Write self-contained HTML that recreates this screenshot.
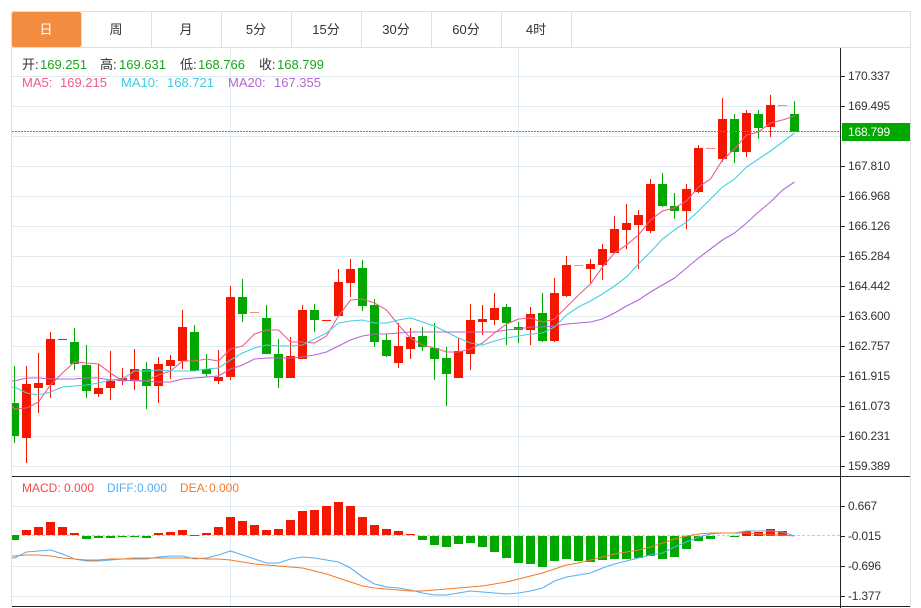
<!DOCTYPE html>
<html><head><meta charset="utf-8"><style>
html,body{margin:0;padding:0;background:#fff;width:921px;height:608px;overflow:hidden}
body{position:relative;font-family:"Liberation Sans","Noto Sans CJK SC",sans-serif;font-size:12px;color:#333}
svg{position:absolute;left:0;top:0}
.t{position:absolute;top:22px;height:16px;line-height:16px;width:70px;text-align:center;font-size:13px;color:#333}
.a{position:absolute;left:848px;height:14px;line-height:14px;font-size:12px;letter-spacing:-.2px;color:#333}
.l{position:absolute;height:16px;line-height:16px;font-size:13px;white-space:nowrap}
.m{font-size:12px}
</style></head><body>
<svg width="921" height="608" viewBox="0 0 921 608">
<defs><clipPath id="c"><rect x="12" y="48" width="828" height="558"/></clipPath></defs>
<g shape-rendering="crispEdges">
<path d="M12 76.5H840M12 106.5H840M12 136.5H840M12 166.5H840M12 196.5H840M12 226.5H840M12 256.5H840M12 286.5H840M12 316.5H840M12 346.5H840M12 376.5H840M12 406.5H840M12 436.5H840M12 466.5H840M12 506.5H840M12 566.5H840M12 596.5H840M230.5 48V606M518.5 48V606" stroke="#e1ebf2" fill="none"/>
<path d="M11.5 11.5H910.5V607M11.5 11.5V607M12 47.5H910M81.5 12V47M151.5 12V47M221.5 12V47M291.5 12V47M361.5 12V47M431.5 12V47M501.5 12V47M571.5 12V47" stroke="#dcdfe3" fill="none"/>
<path d="M12 535.5H840" stroke="#a9d4ea" stroke-dasharray="3 2" fill="none"/>
<g clip-path="url(#c)">
<path d="M14.5 366V443M74.5 328V370M86.5 345V398M146.5 362V409M194.5 325V371M206.5 354V377M242.5 279V322M266.5 305V354M278.5 339V388M314.5 304V332M362.5 260V311M374.5 299V347M386.5 334V357M422.5 327V351M434.5 323V380M446.5 347V406M506.5 304V345M518.5 322V343M542.5 293V342M662.5 173V207M674.5 193V219M734.5 114V163M758.5 110V139M794.5 101V132" stroke="#00a800" fill="none"/>
<path d="M12 403h7v33h-7zM70 342h9v22h-9zM82 365h9v26h-9zM142 369h9v17h-9zM190 332h9v39h-9zM202 369h9v5h-9zM238 297h9v17h-9zM262 318h9v36h-9zM274 354h9v24h-9zM310 310h9v10h-9zM358 268h9v38h-9zM370 305h9v37h-9zM382 340h9v16h-9zM418 336h9v11h-9zM430 348h9v11h-9zM442 358h9v16h-9zM502 307h9v16h-9zM514 327h9v3h-9zM538 313h9v28h-9zM658 184h9v22h-9zM670 206h9v5h-9zM730 119h9v33h-9zM754 114h9v14h-9zM790 114h9v18h-9z" fill="#00a800"/>
<path d="M26.5 366V463M38.5 353V413M50.5 332V398M98.5 364V397M110.5 351V400M122.5 368V385M134.5 349V390M158.5 357V403M170.5 355V379M182.5 310V369M218.5 350V384M230.5 286V380M290.5 337V378M302.5 305V359M338.5 269V316M350.5 259V297M398.5 323V368M410.5 328V359M458.5 338V378M470.5 304V370M482.5 305V335M494.5 293V325M530.5 307V345M554.5 278V342M566.5 256V297M590.5 259V283M602.5 244V280M614.5 216V253M626.5 204V249M638.5 210V269M650.5 179V233M686.5 184V229M698.5 145V193M722.5 98V162M746.5 110V157M770.5 95V137" stroke="#f51600" fill="none"/>
<path d="M22 384h9v54h-9zM34 383h9v5h-9zM46 339h9v46h-9zM58 339h9v1h-9zM94 388h9v6h-9zM106 381h9v7h-9zM118 378h9v3h-9zM130 369h9v12h-9zM154 364h9v22h-9zM166 360h9v6h-9zM178 327h9v34h-9zM214 377h9v4h-9zM226 297h9v80h-9zM286 356h9v22h-9zM298 310h9v49h-9zM322 320h9v1h-9zM334 282h9v34h-9zM346 269h9v14h-9zM394 346h9v17h-9zM406 337h9v12h-9zM454 351h9v27h-9zM466 320h9v34h-9zM478 319h9v3h-9zM490 308h9v12h-9zM526 314h9v16h-9zM550 293h9v48h-9zM562 265h9v31h-9zM586 264h9v5h-9zM598 249h9v16h-9zM610 229h9v24h-9zM622 223h9v7h-9zM634 215h9v10h-9zM646 184h9v47h-9zM682 189h9v22h-9zM694 148h9v44h-9zM718 119h9v40h-9zM742 113h9v39h-9zM766 105h9v22h-9z" fill="#f51600"/>
<path d="M250 312h9v1h-9zM574 265h9v1h-9zM706 148h9v1h-9zM778 105h9v1h-9z" fill="#f98a80"/>
<path d="M12 535h7v5h-7zM82 536h9v3h-9zM94 536h9v2h-9zM106 536h9v2h-9zM118 536h9v1h-9zM130 536h9v1h-9zM142 536h9v2h-9zM190 535h9v1h-9zM418 536h9v4h-9zM430 536h9v9h-9zM442 536h9v11h-9zM454 536h9v8h-9zM466 536h9v7h-9zM478 536h9v11h-9zM490 536h9v16h-9zM502 536h9v22h-9zM514 536h9v27h-9zM526 536h9v28h-9zM538 536h9v31h-9zM550 536h9v25h-9zM562 536h9v23h-9zM574 536h9v25h-9zM586 536h9v26h-9zM598 536h9v24h-9zM610 536h9v23h-9zM622 536h9v23h-9zM634 536h9v22h-9zM646 536h9v20h-9zM658 536h9v23h-9zM670 536h9v21h-9zM682 536h9v13h-9zM694 536h9v5h-9zM706 536h9v3h-9zM730 536h9v1h-9z" fill="#00a800"/>
<path d="M22 530h9v5h-9zM34 527h9v8h-9zM46 522h9v13h-9zM58 527h9v8h-9zM70 533h9v2h-9zM154 533h9v2h-9zM166 532h9v3h-9zM178 530h9v5h-9zM202 533h9v2h-9zM214 527h9v8h-9zM226 517h9v18h-9zM238 521h9v14h-9zM250 525h9v10h-9zM262 530h9v5h-9zM274 529h9v6h-9zM286 520h9v15h-9zM298 511h9v24h-9zM310 510h9v25h-9zM322 506h9v29h-9zM334 502h9v33h-9zM346 506h9v29h-9zM358 517h9v18h-9zM370 525h9v10h-9zM382 529h9v6h-9zM394 531h9v4h-9zM406 534h9v1h-9zM742 531h9v5h-9zM754 532h9v4h-9zM766 529h9v7h-9zM778 531h9v5h-9z" fill="#f51600"/>
</g>
<path d="M12 476.5H840M12 606.5H910M840.5 48V608M841 76.5h4M841 106.5h4M841 166.5h4M841 196.5h4M841 226.5h4M841 256.5h4M841 286.5h4M841 316.5h4M841 346.5h4M841 376.5h4M841 406.5h4M841 436.5h4M841 466.5h4M841 506.5h4M841 536.5h4M841 566.5h4M841 596.5h4" stroke="#222" fill="none"/>
<path d="M841 476.5H910" stroke="#333" fill="none"/>
<rect x="842" y="123" width="68" height="18" fill="#00a800"/>
<path d="M12 131.5H840" stroke="#2fb52f" stroke-dasharray="2 1" fill="none"/>
<rect x="12" y="12" width="69" height="35" rx="2" fill="#f48c40"/>
</g>
<g clip-path="url(#c)" fill="none" stroke-width="1.1">
<polyline stroke="#ef5b8c" points="12,406 14.5,409 26.5,408 38.5,402 50.5,385 62.5,373 74.5,362 86.5,363 98.5,364 110.5,373 122.5,381 134.5,380 146.5,381 158.5,375 170.5,371 182.5,361 194.5,361 206.5,359 218.5,361 230.5,349 242.5,346 254.5,334 266.5,330 278.5,330 290.5,342 302.5,342 314.5,343 326.5,336 338.5,316 350.5,300 362.5,299 374.5,303 386.5,310 398.5,325 410.5,338 422.5,345 434.5,348 446.5,352 458.5,352 470.5,349 482.5,343 494.5,333 506.5,324 518.5,319 530.5,318 542.5,322 554.5,319 566.5,307 578.5,295 590.5,284 602.5,267 614.5,253 626.5,245 638.5,235 650.5,220 662.5,211 674.5,208 686.5,201 698.5,187 710.5,179 722.5,160 734.5,149 746.5,135 758.5,132 770.5,123 782.5,120 794.5,116"/>
<polyline stroke="#45cfe2" points="12,387 14.5,387 26.5,393 38.5,395 50.5,392 62.5,387 74.5,386 86.5,385 98.5,383 110.5,380 122.5,379 134.5,371 146.5,371 158.5,370 170.5,371 182.5,371 194.5,371 206.5,369 218.5,368 230.5,360 242.5,353 254.5,348 266.5,345 278.5,346 290.5,346 302.5,345 314.5,339 326.5,333 338.5,323 350.5,321 362.5,320 374.5,323 386.5,323 398.5,320 410.5,318 422.5,322 434.5,326 446.5,332 458.5,338 470.5,343 482.5,345 494.5,341 506.5,338 518.5,336 530.5,334 542.5,333 554.5,327 566.5,315 578.5,307 590.5,301 602.5,294 614.5,286 626.5,277 638.5,264 650.5,252 662.5,239 674.5,230 686.5,222 698.5,211 710.5,199 722.5,187 734.5,179 746.5,167 758.5,159 770.5,151 782.5,142 794.5,133"/>
<polyline stroke="#b565d2" points="12,381 14.5,381 26.5,378 38.5,378 50.5,379 62.5,379 74.5,379 86.5,378 98.5,378 110.5,380 122.5,380 134.5,381 146.5,381 158.5,382 170.5,382 182.5,379 194.5,378 206.5,377 218.5,376 230.5,369 242.5,365 254.5,359 266.5,358 278.5,358 290.5,358 302.5,357 314.5,355 326.5,352 338.5,346 350.5,340 362.5,336 374.5,334 386.5,334 398.5,333 410.5,332 422.5,332 434.5,332 446.5,332 458.5,332 470.5,332 482.5,332 494.5,332 506.5,330 518.5,329 530.5,327 542.5,327 554.5,326 566.5,324 578.5,323 590.5,322 602.5,319 614.5,313 626.5,306 638.5,300 650.5,292 662.5,285 674.5,278 686.5,268 698.5,258 710.5,249 722.5,240 734.5,233 746.5,223 758.5,212 770.5,202 782.5,190 794.5,182"/>
<polyline stroke="#5aaef2" points="12,558 14.5,558 26.5,552 38.5,551 50.5,550 62.5,554 74.5,559 86.5,561 98.5,561 110.5,560 122.5,559 134.5,559 146.5,559 158.5,557 170.5,556 182.5,556 194.5,559 206.5,558 218.5,555 230.5,551 242.5,555 254.5,559 266.5,563 278.5,563 290.5,559 302.5,557 314.5,558 326.5,560 338.5,562 350.5,568 362.5,577 374.5,584 386.5,587 398.5,588 410.5,590 422.5,593 434.5,595 446.5,595 458.5,593 470.5,591 482.5,592 494.5,593 506.5,594 518.5,593 530.5,591 542.5,588 554.5,581 566.5,577 578.5,575 590.5,573 602.5,568 614.5,564 626.5,561 638.5,558 650.5,555 662.5,553 674.5,547 686.5,542 698.5,537 710.5,534 722.5,533 734.5,533 746.5,531 758.5,531 770.5,531 782.5,532 794.5,536"/>
<polyline stroke="#f57a26" points="12,556 14.5,556 26.5,555 38.5,555 50.5,556 62.5,558 74.5,559 86.5,560 98.5,560 110.5,559 122.5,559 134.5,558 146.5,558 158.5,558 170.5,558 182.5,558 194.5,558 206.5,559 218.5,559 230.5,560 242.5,562 254.5,564 266.5,565 278.5,566 290.5,567 302.5,568 314.5,571 326.5,574 338.5,578 350.5,582 362.5,586 374.5,588 386.5,589 398.5,590 410.5,591 422.5,591 434.5,590 446.5,589 458.5,588 470.5,587 482.5,586 494.5,584 506.5,582 518.5,579 530.5,576 542.5,573 554.5,569 566.5,565 578.5,563 590.5,560 602.5,557 614.5,554 626.5,552 638.5,550 650.5,547 662.5,543 674.5,539 686.5,536 698.5,534 710.5,533 722.5,533 734.5,533 746.5,533 758.5,534 770.5,535 782.5,535 794.5,536"/>
</g>
</svg>
<div class="t" style="left:11px;color:#fff">日</div>
<div class="t" style="left:81px">周</div>
<div class="t" style="left:151px">月</div>
<div class="t" style="left:221px">5分</div>
<div class="t" style="left:291px">15分</div>
<div class="t" style="left:361px">30分</div>
<div class="t" style="left:431px">60分</div>
<div class="t" style="left:501px">4时</div>

<div class="l" style="left:22px;top:57px">开:</div><div class="l" style="left:40px;top:57px;color:#17a51c">169.251</div>
<div class="l" style="left:100px;top:57px">高:</div><div class="l" style="left:119px;top:57px;color:#17a51c">169.631</div>
<div class="l" style="left:180px;top:57px">低:</div><div class="l" style="left:198px;top:57px;color:#17a51c">168.766</div>
<div class="l" style="left:259px;top:57px">收:</div><div class="l" style="left:277px;top:57px;color:#17a51c">168.799</div>
<div class="l" style="left:22px;top:75px;color:#ef5b8c">MA5:</div><div class="l" style="left:60px;top:75px;color:#ef5b8c">169.215</div>
<div class="l" style="left:121px;top:75px;color:#3fcbe2">MA10:</div><div class="l" style="left:167px;top:75px;color:#3fcbe2">168.721</div>
<div class="l" style="left:228px;top:75px;color:#b565d2">MA20:</div><div class="l" style="left:274px;top:75px;color:#b565d2">167.355</div>
<div class="l m" style="left:22px;top:480px;color:#f04a4a">MACD:</div><div class="l m" style="left:64px;top:480px;color:#f04a4a">0.000</div>
<div class="l m" style="left:107px;top:480px;color:#5aaef2">DIFF:</div><div class="l m" style="left:137px;top:480px;color:#5aaef2">0.000</div>
<div class="l m" style="left:180px;top:480px;color:#f57a26">DEA:</div><div class="l m" style="left:209px;top:480px;color:#f57a26">0.000</div>

<div class="a" style="top:69px">170.337</div>
<div class="a" style="top:99px">169.495</div>
<div class="a" style="top:125px;color:#fff">168.799</div>
<div class="a" style="top:159px">167.810</div>
<div class="a" style="top:189px">166.968</div>
<div class="a" style="top:219px">166.126</div>
<div class="a" style="top:249px">165.284</div>
<div class="a" style="top:279px">164.442</div>
<div class="a" style="top:309px">163.600</div>
<div class="a" style="top:339px">162.757</div>
<div class="a" style="top:369px">161.915</div>
<div class="a" style="top:399px">161.073</div>
<div class="a" style="top:429px">160.231</div>
<div class="a" style="top:459px">159.389</div>
<div class="a" style="top:499px">0.667</div>
<div class="a" style="top:529px">-0.015</div>
<div class="a" style="top:559px">-0.696</div>
<div class="a" style="top:589px">-1.377</div>
</body></html>
